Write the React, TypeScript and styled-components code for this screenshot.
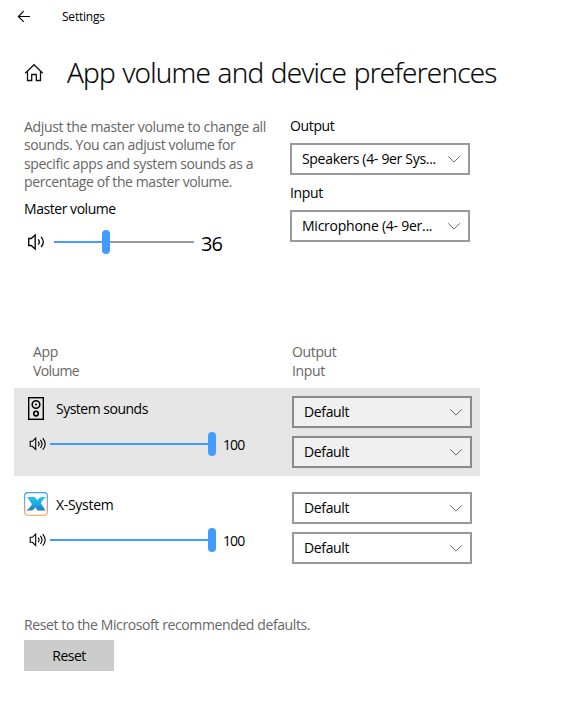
import React from 'react';
import styled, { createGlobalStyle } from 'styled-components';

const GlobalStyle = createGlobalStyle`
  * { box-sizing: border-box; }
  body {
    margin: 0;
    background: #fff;
    color: #000;
    font-family: "Open Sans", "Noto Sans", sans-serif;
    font-size: 14px;
    line-height: 18px;
  }
`;

const Page = styled.main`
  width: 580px;
  height: 721px;
  overflow: hidden;
  background: #fff;
`;

const TitleBar = styled.header`
  display: flex;
  align-items: center;
  gap: 31px;
  height: 33px;
  padding-left: 17px;
`;

const WindowTitle = styled.span`
  font-size: 12px;
  line-height: 16px;
  letter-spacing: -0.22px;
  padding-top: 1px;
`;

const HeadingRow = styled.div`
  display: flex;
  align-items: center;
  gap: 22px;
  height: 80px;
  padding-left: 24px;
`;

const Heading = styled.h1`
  margin: 0;
  padding-bottom: 2px;
  font-size: 28px;
  font-weight: 300;
  line-height: 36px;
  letter-spacing: -0.76px;
  word-spacing: 1px;
  -webkit-text-stroke: 0.2px #000;
  white-space: nowrap;
`;

const Text = styled.span<{ $track?: number; $muted?: boolean }>`
  display: block;
  white-space: nowrap;
  letter-spacing: ${(p) => p.$track ?? -0.36}px;
  color: ${(p) => (p.$muted ? '#666' : 'inherit')};
`;

const MasterSection = styled.section`
  display: grid;
  grid-template-columns: 266px 180px;
  height: 230px;
  padding: 4px 0 0 24px;
`;

const MasterColumn = styled.div`
  display: flex;
  flex-direction: column;
  padding-top: 1px;
`;

const Description = styled.div`
  height: 74px;
  margin-bottom: 8px;
`;

const DescriptionLine = styled(Text)`
  height: 18.3px;
`;

const DeviceColumn = styled.div`
  display: flex;
  flex-direction: column;
  gap: 8px;
`;

const Field = styled.div`
  display: flex;
  flex-direction: column;
  gap: 8px;
  height: 59px;
`;

const VolumeRow = styled.div<{ $master?: boolean }>`
  display: flex;
  align-items: center;
  height: 26px;
  margin-top: ${(p) => (p.$master ? 11 : 10)}px;
  padding-left: ${(p) => (p.$master ? 3 : 5)}px;
`;

const Track = styled.div<{ $width: number; $level: number; $gap: number }>`
  display: flex;
  align-items: center;
  flex: none;
  width: ${(p) => p.$width}px;
  height: 24px;
  margin-left: ${(p) => p.$gap}px;
  &::before {
    content: '';
    width: ${(p) => p.$level}px;
    height: 2px;
    background: #429cff;
  }
  &::after {
    content: '';
    flex: 1;
    height: 2px;
    background: #999;
  }
`;

const Thumb = styled.i`
  width: 8px;
  height: 24px;
  border-radius: 4px;
  background: #429cff;
`;

const Level = styled.output<{ $large?: boolean }>`
  font-size: ${(p) => (p.$large ? 20 : 14)}px;
  line-height: 24px;
  letter-spacing: -0.9px;
  margin: ${(p) => (p.$large ? '4px 0 0 7px' : '2px 0 0 7px')};
`;

const Select = styled.button<{ $shaded?: boolean }>`
  display: flex;
  align-items: center;
  justify-content: space-between;
  width: 180px;
  height: 32px;
  padding: 0 7px 0 10px;
  border: 2px solid ${(p) => (p.$shaded ? '#8a8a8a' : '#999')};
  border-radius: 0;
  background: ${(p) => (p.$shaded ? '#f0f0f0' : '#fff')};
  color: #000;
  font: inherit;
`;

const Columns = styled.div`
  display: grid;
  grid-template-columns: 259px 180px;
  height: 45px;
  padding-left: 33px;
  line-height: 19px;
`;

const ColumnLabels = styled.div`
  margin-top: -1px;
`;

const AppRow = styled.section<{ $shaded?: boolean }>`
  display: grid;
  grid-template-columns: 268px 180px;
  width: 466px;
  height: 88px;
  margin: 0 0 8px 14px;
  padding: 8px 0 0 10px;
  background: ${(p) => (p.$shaded ? '#e6e6e6' : 'transparent')};
`;

const AppName = styled.div`
  display: flex;
  align-items: flex-start;
  gap: 8px;
  height: 25px;

  ${Text} {
    padding-top: 4px;
  }
`;

const SelectStack = styled.div`
  display: flex;
  flex-direction: column;
  gap: 8px;
`;

const ResetSection = styled.section`
  display: flex;
  flex-direction: column;
  align-items: flex-start;
  gap: 6px;
  padding: 36px 0 0 24px;
`;

const ResetButton = styled.button`
  width: 90px;
  height: 31px;
  padding: 1px 0 0;
  border: 0;
  background: #ccc;
  color: #000;
  font: inherit;
  letter-spacing: -0.5px;
`;

const BackIcon = () => (
  <svg width="14" height="14" viewBox="0 0 14 14" fill="none" stroke="#000" strokeWidth="1.15">
    <path d="M13 6.5H1.5M6.7 1.2L1.4 6.5l5.3 5.3" />
  </svg>
);

const HomeIcon = () => (
  <svg width="21" height="20" viewBox="0 0 21 20" fill="none" stroke="#111" strokeWidth="1.3">
    <path d="M1.2 10.2L10 1.7l8.8 8.5M3.5 8.2v9.3h4.2v-6h4.6v6h4.2V8.2" />
  </svg>
);

const SpeakerIcon = ({ waves }: { waves: 2 | 3 }) => (
  <svg width="19" height="18" viewBox="0 0 19 18" fill="none" stroke="#000" strokeWidth={waves === 2 ? 1.3 : 1.1}>
    {waves === 2 ? (
      <>
        <path d="M1.7 5.5v7h2.5l4 3.6V1.9l-4 3.6z" />
        <path d="M11.3 6.3q2 2.7 0 5.4M14.1 3.8q4.4 5.2 0 10.4" />
      </>
    ) : (
      <>
        <path d="M1.2 6.3v5h2.2l3.3 3.2V3.1L3.4 6.3z" />
        <path d="M9.2 6.6q1.7 2.3 0 4.6M11.4 4.8q3.2 4.1 0 8.2M13.7 3.1q5 5.8 0 11.6" />
      </>
    )}
  </svg>
);

const Chevron = () => (
  <svg width="14" height="9" viewBox="0 0 14 9" fill="none" stroke="#666" strokeWidth="1">
    <path d="M1.2 1.3L7 7.1l5.8-5.8" />
  </svg>
);

const SystemSoundsIcon = () => (
  <svg width="24" height="24" viewBox="0 0 24 24" fill="none" stroke="#000">
    <rect x="4.7" y="1.7" width="14.6" height="21.6" strokeWidth="1.4" />
    <circle cx="12" cy="8.5" r="3.8" strokeWidth="1.6" />
    <circle cx="12" cy="8.5" r="1" fill="#000" stroke="none" />
    <circle cx="12" cy="17.6" r="2.3" strokeWidth="1.6" />
  </svg>
);

const XSystemIcon = () => (
  <svg width="24" height="24" viewBox="0 0 24 24">
    <defs>
      <linearGradient id="frame" x1="0" y1="0" x2="0" y2="1">
        <stop offset="0" stopColor="#35a8ea" />
        <stop offset=".35" stopColor="#6fa5e0" />
        <stop offset=".7" stopColor="#f08a80" />
        <stop offset="1" stopColor="#ffb070" />
      </linearGradient>
      <linearGradient id="mark" x1="0" y1="0" x2="0" y2="1">
        <stop offset="0" stopColor="#25c4ee" />
        <stop offset=".55" stopColor="#18a9df" />
        <stop offset="1" stopColor="#2676bd" />
      </linearGradient>
    </defs>
    <rect x=".6" y=".6" width="22.8" height="22.8" rx="3.4" fill="#fff" stroke="url(#frame)" strokeWidth="1.2" />
    <path
      fill="url(#mark)"
      d="M2.6 5h8.2l2.6 3.2Q15.8 5 18 5h4q-2.6 1.4-5.2 6l3.4 5.4q.6 1.2 1.6 2.1h-8.2l-2.2-3.2q-2.2 3.2-4.6 3.2H2q3.4-1.7 6-6.3L4.6 7.2Q3.8 5.8 2.6 5z"
    />
  </svg>
);

const VolumeTrack = ({ width, before, gap }: { width: number; before: number; gap: number }) => (
  <Track $width={width} $level={before} $gap={gap}>
    <Thumb />
  </Track>
);

const Picker = ({ label, track, shaded }: { label: string; track?: number; shaded?: boolean }) => (
  <Select $shaded={shaded}>
    <Text $track={track}>{label}</Text>
    <Chevron />
  </Select>
);

const AppEntry = ({ icon, name, shaded }: { icon: React.ReactNode; name: string; shaded?: boolean }) => (
  <AppRow $shaded={shaded}>
    <div>
      <AppName>
        {icon}
        <Text $track={shaded ? -0.5 : -0.3}>{name}</Text>
      </AppName>
      <VolumeRow>
        <SpeakerIcon waves={3} />
        <VolumeTrack width={166} before={158} gap={2} />
        <Level>100</Level>
      </VolumeRow>
    </div>
    <SelectStack>
      <Picker label="Default" shaded={shaded} />
      <Picker label="Default" shaded={shaded} />
    </SelectStack>
  </AppRow>
);

export default function App() {
  return (
    <Page>
      <GlobalStyle />
      <TitleBar>
        <BackIcon />
        <WindowTitle>Settings</WindowTitle>
      </TitleBar>
      <HeadingRow>
        <HomeIcon />
        <Heading>App volume and device preferences</Heading>
      </HeadingRow>
      <MasterSection>
        <MasterColumn>
          <Description>
            <DescriptionLine $muted $track={-0.32}>Adjust the master volume to change all</DescriptionLine>
            <DescriptionLine $muted $track={-0.4}>sounds. You can adjust volume for</DescriptionLine>
            <DescriptionLine $muted $track={-0.37}>specific apps and system sounds as a</DescriptionLine>
            <DescriptionLine $muted $track={-0.4}>percentage of the master volume.</DescriptionLine>
          </Description>
          <Text $track={-0.45}>Master volume</Text>
          <VolumeRow $master>
            <SpeakerIcon waves={2} />
            <VolumeTrack width={140} before={48} gap={8} />
            <Level $large>36</Level>
          </VolumeRow>
        </MasterColumn>
        <DeviceColumn>
          <Field>
            <Text>Output</Text>
            <Picker label="Speakers (4- 9er Sys..." track={-0.31} />
          </Field>
          <Field>
            <Text>Input</Text>
            <Picker label="Microphone (4- 9er..." track={-0.25} />
          </Field>
        </DeviceColumn>
      </MasterSection>
      <Columns>
        <ColumnLabels>
          <Text $muted>App</Text>
          <Text $muted $track={-0.6}>Volume</Text>
        </ColumnLabels>
        <ColumnLabels>
          <Text $muted>Output</Text>
          <Text $muted>Input</Text>
        </ColumnLabels>
      </Columns>
      <AppEntry icon={<SystemSoundsIcon />} name="System sounds" shaded />
      <AppEntry icon={<XSystemIcon />} name="X-System" />
      <ResetSection>
        <Text $muted $track={-0.39}>Reset to the Microsoft recommended defaults.</Text>
        <ResetButton>Reset</ResetButton>
      </ResetSection>
    </Page>
  );
}
